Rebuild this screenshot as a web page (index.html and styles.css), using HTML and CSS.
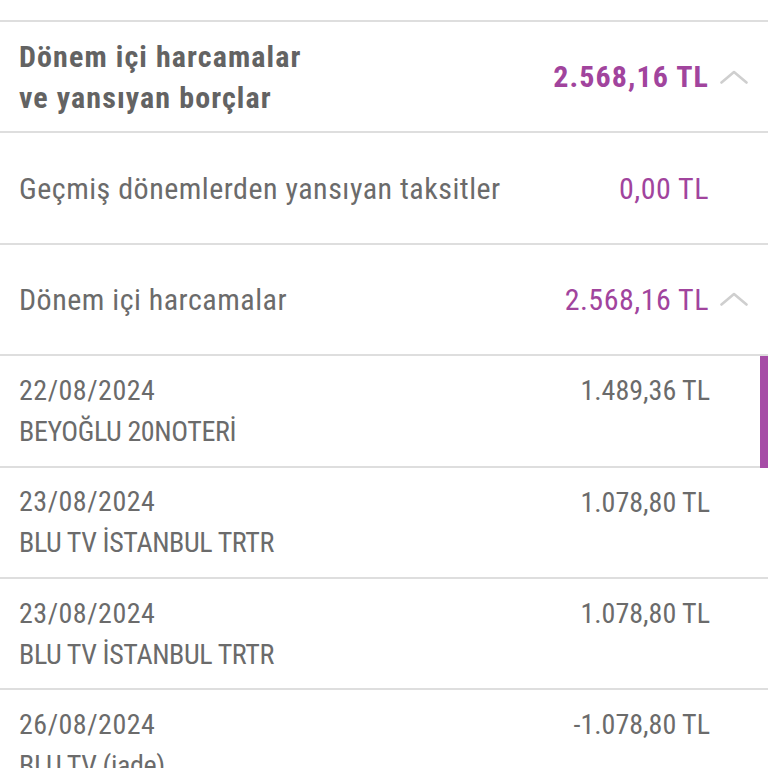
FILE: index.html
```html
<!DOCTYPE html>
<html lang="tr">
<head>
<meta charset="utf-8">
<link rel="stylesheet" href="styles.css">
</head>
<body>
<div class="list">
  <div class="row top">
    <div class="label bold">Dönem içi harcamalar<br>ve yansıyan borçlar</div>
    <div class="amount bold">2.568,16 TL</div>
    <div class="chev"><svg viewBox="0 0 28 14" width="28" height="14"><path d="M1.5 12.5 L14 2 L26.5 12.5" fill="none" stroke="#cfcfcf" stroke-width="2.6" stroke-linecap="round" stroke-linejoin="round"/></svg></div>
  </div>
  <div class="row top">
    <div class="label">Geçmiş dönemlerden yansıyan taksitler</div>
    <div class="amount">0,00 TL</div>
    <div class="chev"></div>
  </div>
  <div class="row top">
    <div class="label">Dönem içi harcamalar</div>
    <div class="amount">2.568,16 TL</div>
    <div class="chev"><svg viewBox="0 0 28 14" width="28" height="14"><path d="M1.5 12.5 L14 2 L26.5 12.5" fill="none" stroke="#cfcfcf" stroke-width="2.6" stroke-linecap="round" stroke-linejoin="round"/></svg></div>
  </div>
  <div class="row tx">
    <div class="label"><div class="date">22/08/2024</div><div class="name">BEYOĞLU 20NOTERİ</div></div>
    <div class="amount">1.489,36 TL</div>
    <div class="chev"></div>
    <div class="marker"></div>
  </div>
  <div class="row tx">
    <div class="label"><div class="date">23/08/2024</div><div class="name">BLU TV İSTANBUL TRTR</div></div>
    <div class="amount">1.078,80 TL</div>
    <div class="chev"></div>
  </div>
  <div class="row tx">
    <div class="label"><div class="date">23/08/2024</div><div class="name">BLU TV İSTANBUL TRTR</div></div>
    <div class="amount">1.078,80 TL</div>
    <div class="chev"></div>
  </div>
  <div class="row tx">
    <div class="label"><div class="date">26/08/2024</div><div class="name">BLU TV (iade)</div></div>
    <div class="amount">-1.078,80 TL</div>
    <div class="chev"></div>
  </div>
</div>
</body>
</html>
```
FILE: styles.css
```css
html, body {
  margin: 0;
  padding: 0;
  background: #ffffff;
  overflow: hidden;
}
body {
  padding-top: 20px;
  font-family: "Roboto", "Open Sans", sans-serif;
  font-stretch: 87.5%;
  color: #6b6b6b;
}
.list {
  border-top: 2px solid #dedede;
}
.row {
  position: relative;
  display: flex;
  align-items: center;
  height: 109.4px;
  padding: 0 20px 0 19px;
  border-bottom: 2px solid #dedede;
  font-size: 28px;
}
.top {
  font-size: 30px;
  letter-spacing: 0.5px;
}
.label {
  flex: 1;
  line-height: 41px;
  white-space: nowrap;
}
.bold {
  font-weight: 700;
  color: #636363;
  letter-spacing: 1.1px;
}
.amount {
  color: #a1449d;
  white-space: nowrap;
  line-height: 41px;
}
.amount.bold {
  color: #a1449d;
}
.chev {
  width: 28px;
  margin-left: 11px;
  display: flex;
  align-items: center;
  justify-content: center;
  height: 14px;
}
.chev svg {
  display: block;
}
.tx .amount {
  color: #6b6b6b;
  align-self: flex-start;
  margin-top: 14px;
  margin-right: -1px;
}
.date {
  letter-spacing: 0.5px;
}
.name {
  letter-spacing: -0.4px;
}
.marker {
  position: absolute;
  top: 0;
  right: 0;
  bottom: -2px;
  width: 8px;
  background: #a64ca6;
}
```
